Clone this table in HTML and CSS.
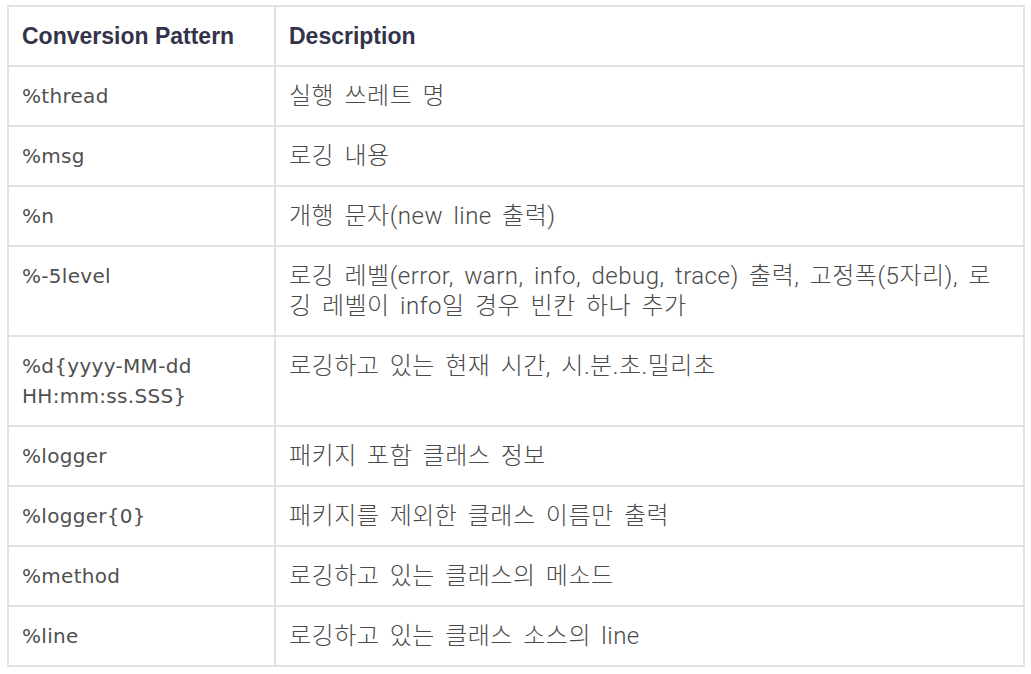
FILE: index.html
```html
<!DOCTYPE html>
<html lang="ko">
<head>
<meta charset="utf-8">
<title>Conversion Pattern</title>
<link rel="stylesheet" href="styles.css">
</head>
<body>
<table class="ptable">
  <colgroup>
    <col class="col-pattern">
    <col class="col-desc">
  </colgroup>
  <thead>
    <tr>
      <th>Conversion Pattern</th>
      <th>Description</th>
    </tr>
  </thead>
  <tbody>
    <tr><td class="pat">%thread</td><td class="desc">실행 쓰레트 명</td></tr>
    <tr><td class="pat">%msg</td><td class="desc">로깅 내용</td></tr>
    <tr><td class="pat">%n</td><td class="desc">개행 문자(new line 출력)</td></tr>
    <tr><td class="pat">%-5level</td><td class="desc">로깅 레벨(error, warn, info, debug, trace) 출력, 고정폭(5자리), 로깅 레벨이 info일 경우 빈칸 하나 추가</td></tr>
    <tr><td class="pat">%d{yyyy-MM-dd HH:mm:ss.SSS}</td><td class="desc">로깅하고 있는 현재 시간, 시.분.초.밀리초</td></tr>
    <tr><td class="pat">%logger</td><td class="desc">패키지 포함 클래스 정보</td></tr>
    <tr><td class="pat">%logger{0}</td><td class="desc">패키지를 제외한 클래스 이름만 출력</td></tr>
    <tr><td class="pat">%method</td><td class="desc">로깅하고 있는 클래스의 메소드</td></tr>
    <tr><td class="pat">%line</td><td class="desc">로깅하고 있는 클래스 소스의 line</td></tr>
  </tbody>
</table>
</body>
</html>
```
FILE: styles.css
```css
html, body {
  margin: 0;
  padding: 0;
  background: #ffffff;
}

body {
  padding: 5px 0 0 7px;
  font-family: "Liberation Sans", "Noto Sans CJK KR", sans-serif;
}

.ptable {
  width: 1018px;
  border-collapse: collapse;
  table-layout: fixed;
  border: 2px solid #e2e2e2;
}

.col-pattern {
  width: 267px;
}

.ptable th,
.ptable td {
  border: 2px solid #e2e2e2;
  padding: 14px 13px;
  line-height: 30px;
  text-align: left;
  vertical-align: top;
}

.ptable th {
  font-family: "Liberation Sans", "Noto Sans CJK KR", sans-serif;
  font-weight: 700;
  font-size: 23px;
  color: #33334a;
}

.pat {
  font-family: "DejaVu Sans", "Noto Sans CJK KR", sans-serif;
  font-size: 20px;
  color: #505050;
  letter-spacing: 0.3px;
}

.ptable td.desc {
  padding-right: 16px;
  font-family: Roboto, "Liberation Sans", "Noto Sans CJK KR", sans-serif;
  font-size: 24px;
  font-weight: 300;
  color: #4a4a4a;
  word-spacing: 4px;
  letter-spacing: 0.5px;
}
```
